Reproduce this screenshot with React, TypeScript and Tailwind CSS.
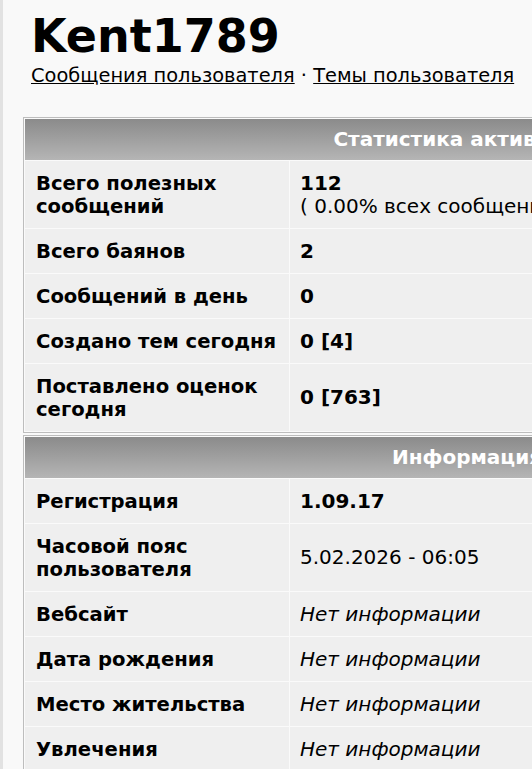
const STATS = [
  { label: "Всего полезных сообщений", value: "112", sub: "( 0.00% всех сообщений / 0.00 сообщений в день )" },
  { label: "Всего баянов", value: "2" },
  { label: "Сообщений в день", value: "0" },
  { label: "Создано тем сегодня", value: "0 [4]" },
  { label: "Поставлено оценок сегодня", value: "0 [763]" },
];

const INFO = [
  { label: "Регистрация", value: "1.09.17", bold: true },
  { label: "Часовой пояс пользователя", value: "5.02.2026 - 06:05" },
  { label: "Вебсайт", value: "Нет информации", italic: true },
  { label: "Дата рождения", value: "Нет информации", italic: true },
  { label: "Место жительства", value: "Нет информации", italic: true },
  { label: "Увлечения", value: "Нет информации", italic: true },
  { label: "Род занятий", value: "Нет информации", italic: true },
];

interface Row {
  label: string;
  value: string;
  sub?: string;
  bold?: boolean;
  italic?: boolean;
}

const InfoTable = ({ title, rows, boldValues }: { title: string; rows: Row[]; boldValues?: boolean }) => (
  <table className="w-[888px] border border-[#bdbdbd] border-separate border-spacing-[1px] bg-[#fafafa]">
    <tbody>
      <tr>
        <th
          colSpan={2}
          className="h-[41px] bg-gradient-to-b from-[#8b8b8b] to-[#b5b5b5] text-white text-[20px] font-bold text-center leading-[23px]">
          {title}
        </th>
      </tr>
      {rows.map((row) => (
        <tr key={row.label}>
          <td className="w-[264px] bg-[#efefef] pl-[11px] pr-0 py-[10.5px] font-bold text-[19.6px] leading-[23px] align-middle">
            {row.label}
          </td>
          <td className="bg-[#efefef] pl-[10px] py-[10.5px] text-[20px] leading-[23px] align-middle whitespace-nowrap">
            <span className={`${boldValues || row.bold ? "font-bold" : ""} ${row.italic ? "italic" : ""}`}>
              {row.value}
            </span>
            {row.sub && <div>{row.sub}</div>}
          </td>
        </tr>
      ))}
    </tbody>
  </table>
);

const App = () => {
  return (
    <div
      className="w-screen h-screen overflow-hidden bg-[#f9f9f9] text-black border-l-[3px] border-[#e2e2e2]"
      style={{ fontFamily: '"DejaVu Sans", Verdana, sans-serif' }}>
      <div className="pl-[20px] pt-[8px]">
        <h1 className="pl-[8px] text-[46px] font-bold leading-[56px]">Kent1789</h1>
        <div className="pl-[8px] text-[19.4px] leading-[24px]">
          <a className="underline cursor-pointer">Сообщения пользователя</a>
          {" · "}
          <a className="underline cursor-pointer">Темы пользователя</a>
        </div>
        <div className="mt-[29px] space-y-[2px]">
          <InfoTable title="Статистика активности" rows={STATS} boldValues />
          <InfoTable title="Информация" rows={INFO} />
        </div>
      </div>
    </div>
  );
};

export default App;
